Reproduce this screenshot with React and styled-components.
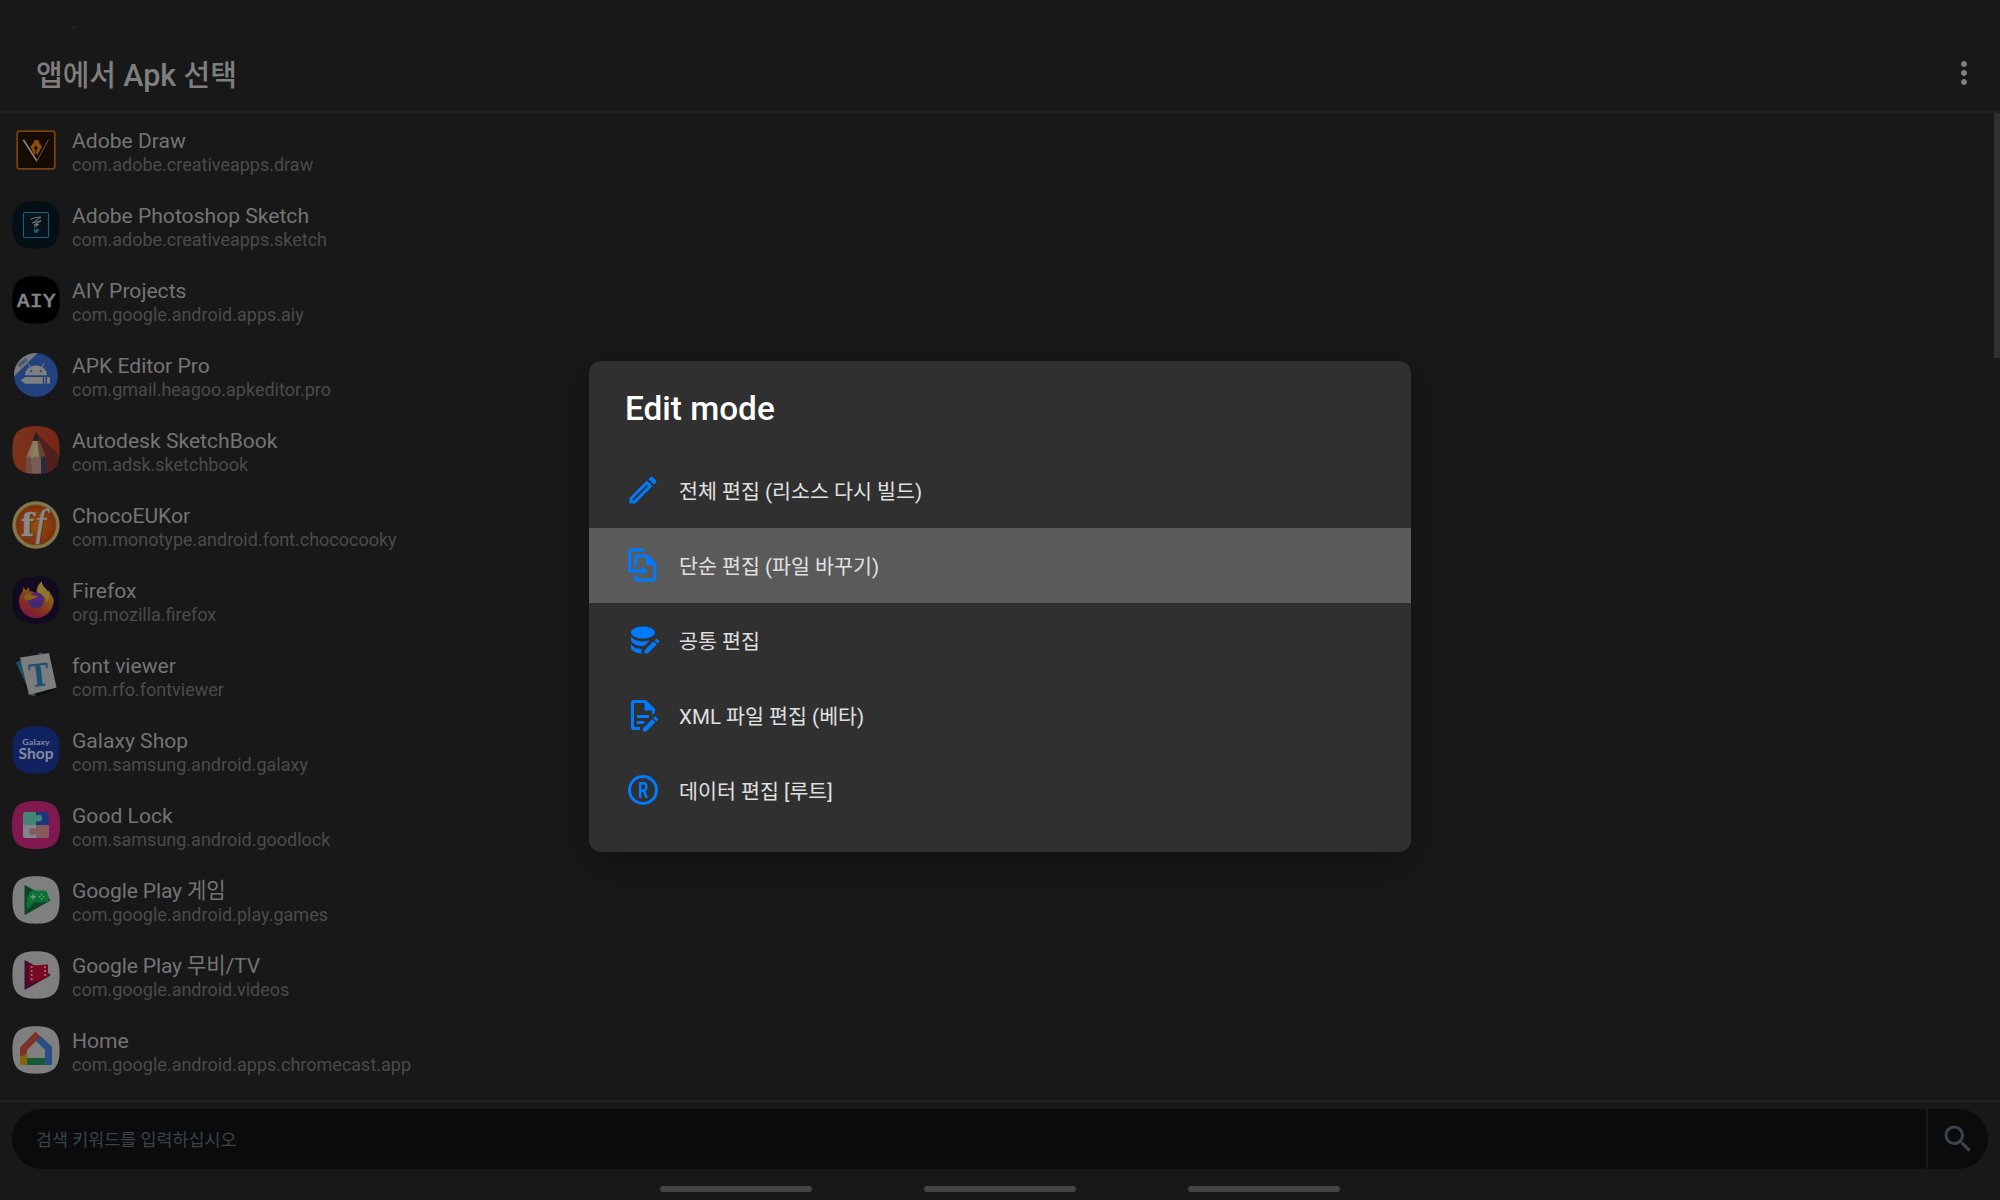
import React from 'react';
import styled, { createGlobalStyle } from 'styled-components';
import { MdMoreVert, MdSearch } from 'react-icons/md';

const GlobalStyle = createGlobalStyle`
  * { box-sizing: border-box; }
  html, body { margin: 0; background: #181818; }
  body { font-family: Roboto, "Noto Sans CJK KR", sans-serif; overflow: hidden; }
`;

const Screen = styled.div`
  position: relative;
  width: 2000px;
  height: 1200px;
  display: flex;
  flex-direction: column;
  background: #181818;
  overflow: hidden;
`;

const StatusBar = styled.div`
  height: 36px;
  padding: 24px 0 0 71px;
  line-height: 0;
`;

const Header = styled.header`
  height: 77px;
  padding: 0 18px 2px 36px;
  display: flex;
  align-items: center;
  justify-content: space-between;
  border-bottom: 2px solid #242424;
  color: #7f7f7f;
`;

const Title = styled.h1`
  margin: 6px 0 0;
  font-size: 29px;
  line-height: 40px;
  font-weight: 500;
  white-space: nowrap;
`;

const TitleLatin = styled.span`
  font-size: 30.5px;
`;

const ListArea = styled.main`
  height: 987px;
  display: flex;
  justify-content: space-between;
`;

const AppList = styled.ul`
  margin: 0;
  padding: 0;
  list-style: none;
`;

const AppRow = styled.li`
  height: 75px;
  padding: 13px 0 0 12px;
  display: flex;
  gap: 12px;
`;

const AppIcon = styled.svg`
  width: 48px;
  height: 48px;
  flex: none;
`;

const AppText = styled.div`
  display: flex;
  flex-direction: column;
  padding-top: 3px;
  white-space: nowrap;
`;

const AppName = styled.span`
  font-size: 21.1px;
  line-height: 24px;
  letter-spacing: ${({ $tight }) => ($tight ? '-0.15px' : 'normal')};
  color: #747474;
`;

const PackageName = styled.span`
  font-size: 18px;
  line-height: 24px;
  color: #4b4b4b;
`;

const ScrollThumb = styled.div`
  width: 6px;
  height: 245px;
  background: #303030;
`;

const SearchDock = styled.div`
  height: 69px;
  padding: 7px 12px 0;
  border-top: 2px solid #242424;
`;

const SearchBar = styled.div`
  height: 60px;
  display: flex;
  gap: 2px;
  border-radius: 30px;
  overflow: hidden;
`;

const SearchField = styled.div`
  flex: 1;
  padding: 1px 0 0 24px;
  display: flex;
  align-items: center;
  background: #0b0b0b;
  color: #39434c;
  font-size: 17.4px;
  line-height: 24px;
`;

const SearchButton = styled.div`
  width: 60px;
  display: flex;
  align-items: center;
  justify-content: center;
  background: #0b0b0b;
  color: #3b444d;
`;

const NavBar = styled.nav`
  flex: 1;
  padding-top: 17px;
  display: flex;
  justify-content: center;
  gap: 111.5px;
`;

const NavHandle = styled.span`
  width: 152.5px;
  height: 6px;
  border-radius: 3px;
  background: #454545;
`;

const Overlay = styled.div`
  position: absolute;
  inset: 0;
  padding-top: 361px;
  display: flex;
  justify-content: center;
  align-items: flex-start;
`;

const Dialog = styled.section`
  width: 822px;
  height: 491px;
  border-radius: 12px;
  background: #303030;
  box-shadow: 0 12px 36px rgba(0, 0, 0, 0.3);
`;

const DialogTitle = styled.h2`
  margin: 0;
  height: 92px;
  padding: 28px 0 0 36px;
  font-size: 33.35px;
  line-height: 40px;
  font-weight: 500;
  color: #fff;
`;

const Option = styled.div`
  height: 75px;
  padding: 0 36px 1px;
  display: flex;
  align-items: center;
  gap: 18px;
  background: ${({ $active }) => ($active ? '#5a5a5a' : 'transparent')};
`;

const OptionIcon = styled.svg`
  width: 36px;
  height: 36px;
  flex: none;
  fill: #007bff;
`;

const OptionLabel = styled.span`
  margin-top: 4px;
  font-size: 20.6px;
  line-height: 28px;
  color: #e0e0e0;
  white-space: nowrap;
`;

const SQUIRCLE = 'M24 .3C41.5 .3 47.6 6.5 47.6 24S41.5 47.7 24 47.7 .4 41.5 .4 24 6.5 .3 24 .3Z';
const Squircle = ({ fill }) => <path d={SQUIRCLE} fill={fill} />;

const icons = {
  draw: (
    <>
      <rect x="5.2" y="5.2" width="37.6" height="37.6" rx="2.5" fill="#150b02" stroke="#76410f" strokeWidth="1.8" />
      <path d="M10.400 14l1.800-.6 13 20.600-.8 1.800Z" fill="#85807a" />
      <path d="M36.600 13.600L25 34.600l-.7 1.200" fill="none" stroke="#77736d" strokeWidth=".8" />
      <path d="M22.200 14h4.400l.4 2.600 3 4.200-4.400 8-1.200-.2v-5.200a1.600 1.600 0 1 0-1 0v5.200l-1.400-.2-3.600-8 3.400-4Z" fill="#8d4c0c" />
    </>
  ),
  sketch: (
    <>
      <Squircle fill="#040f15" />
      <rect x="11.5" y="11.5" width="25" height="25" rx="1.2" fill="#07131a" stroke="#17607d" strokeWidth="1.1" />
      <path d="M18.500 18.500c3-1.800 7-2.400 10.500-2.300L20.500 22l8.500-2.200-7 4.400 5-1-5 3.500" fill="none" stroke="#777c7e" strokeWidth="1" />
      <path d="M21.500 28.200l1.800.5 1.500-1.400.5 1.200 2-.2-.8 1.800-2.200 2.500-2.400-2Z" fill="#17627f" />
    </>
  ),
  aiy: (
    <>
      <Squircle fill="#000" />
      <text x="24.3" y="31" textAnchor="middle" fontFamily='"DejaVu Sans Mono", monospace' fontWeight="400" fontSize="18.5" textLength="39" lengthAdjust="spacingAndGlyphs" fill="#858585" stroke="#858585" strokeWidth=".6">AIY</text>
    </>
  ),
  apkEditor: (
    <>
      <clipPath id="apk-disc"><circle cx="24" cy="24" r="22" /></clipPath>
      <circle cx="24" cy="24" r="22" fill="#21427d" />
      <g clipPath="url(#apk-disc)"><path d="M0 0H27.500L0 27.500Z" fill="#7b7b7b" /></g>
      <text x="0" y="0" transform="translate(8.8 16.4) rotate(-45)" fontSize="5.5" fontWeight="700" textLength="10.5" fill="#263f6c">PRO</text>
      <path d="M13 24.200c0-5.500 4.800-9.700 11-9.700s11 4.200 11 9.700Z" fill="#7f7f7f" />
      <path d="M18 16l-2-3.800M30 16l2-3.800" stroke="#7f7f7f" strokeWidth="1" />
      <circle cx="19.2" cy="20.2" r="1.1" fill="#21427d" /><circle cx="28.8" cy="20.2" r="1.1" fill="#21427d" />
      <path d="M9 29.200l4-3.200h17.800v6.700H13ZM32.200 26h1.400v6.700h-1.400ZM35 26h1.500a1.500 1.500 0 0 1 1.500 1.500v3.700a1.500 1.500 0 0 1-1.500 1.500H35Z" fill="#7f7f7f" />
    </>
  ),
  sketchBook: (
    <>
      <linearGradient id="book-bg" x2="1"><stop stopColor="#7b351b" /><stop offset="1" stopColor="#782519" /></linearGradient>
      <clipPath id="book-clip"><path d={SQUIRCLE} /></clipPath>
      <path d={SQUIRCLE} fill="url(#book-bg)" />
      <g clipPath="url(#book-clip)">
        <path d="M24 6L48 30v18H34V30Z" fill="#50211c" />
        <path d="M20.800 15H24V38H14V32Z" fill="#85765c" />
        <path d="M22.500 15h3L29 36H19.500Z" fill="#8d7d62" />
        <path d="M25.500 15h1.800L34 32v6h-6Z" fill="#594a3b" />
        <path d="M24 5.500l3.300 9.500-1.800-.6-1.500.6-1.700-.6-1.600.6Z" fill="#20232a" />
        <path d="M14 32.500q2.800-4 5.500 0V48H14Z" fill="#6b4b44" />
        <path d="M19.500 33q4.500-5 9.500 0v15h-9.500Z" fill="#7b5c54" />
        <path d="M29 33q2.500-5 5-.5V48h-5Z" fill="#252b3b" />
      </g>
    </>
  ),
  choco: (
    <>
      <radialGradient id="choco-bg"><stop stopColor="#93500e" /><stop offset=".75" stopColor="#83380d" /><stop offset="1" stopColor="#7e2e0c" /></radialGradient>
      <circle cx="24" cy="24" r="23.7" fill="#827749" />
      <circle cx="24" cy="24" r="20" fill="url(#choco-bg)" stroke="#6d4720" strokeWidth=".8" />
      <g fill="#4b2b18" transform="translate(1 .8)">
        <text x="9" y="35.3" fontFamily='"DejaVu Serif", serif' fontWeight="700" fontSize="32" textLength="13" lengthAdjust="spacingAndGlyphs">f</text>
        <text x="23.5" y="34.5" fontFamily='"Liberation Serif", serif' fontStyle="italic" fontSize="37">f</text>
      </g>
      <g fill="#8b8888" stroke="#8b8888" strokeWidth=".5">
        <text x="9" y="35.3" fontFamily='"DejaVu Serif", serif' fontWeight="700" fontSize="32" textLength="13" lengthAdjust="spacingAndGlyphs">f</text>
        <text x="23.5" y="34.5" fontFamily='"Liberation Serif", serif' fontStyle="italic" fontSize="37">f</text>
      </g>
    </>
  ),
  firefox: (
    <>
      <linearGradient id="fx-body" x1=".85" y1="0" x2=".25" y2="1">
        <stop stopColor="#8b7c22" /><stop offset=".35" stopColor="#89591c" /><stop offset=".7" stopColor="#842d24" /><stop offset="1" stopColor="#7c1444" />
      </linearGradient>
      <radialGradient id="fx-globe" cx=".55" cy=".2" r=".9"><stop stopColor="#5c2181" /><stop offset="1" stopColor="#302f70" /></radialGradient>
      <Squircle fill="#120a20" />
      <path d="M24 42C14.500 42 7 34.600 7 25.500 7 21 8.500 17.600 10.800 15l.4-3.800 2.900 3 2.800-3.200.6 4.400c2.700-.6 4.700.6 5.700 2.300h1.500c-.6-4.800 1.200-9.200 5-12.300.5 4.500 2.600 5.700 5 8.300l.3 3.200 1.800-2.700 2 4c2 2.400 3 5 3 7.300C41 34.600 33.500 42 24 42Z" fill="url(#fx-body)" />
      <circle cx="24" cy="24.2" r="8" fill="url(#fx-globe)" />
      <path d="M11.500 20.500c3-3.500 7-3 9.300-1.200l4.700.5c-.5 2-2.500 2.800-4.700 3-2 2-4.500 1-7.300 1.500Z" fill="#8b5d1b" />
      <path d="M29.700 5.500c.5 4.500 2.600 5.700 5 8.300C37.500 17 38 22 35 26.500c0-5.500-4-8-9.500-10.500-.2-4 1.200-8 4.200-10.500Z" fill="#8c7930" />
    </>
  ),
  fontViewer: (
    <>
      <path d="M8 33l18 12 15-6-1-3Z" fill="#0e0e0e" />
      <path d="M4 11.500l5.500-2.500L18 37l6 7.500-4 1Z" fill="#1f4e68" />
      <path d="M25 3l5-1.800 1 2.300Z" fill="#255a73" />
      <path d="M8 6.500L37 2l7.500 34.500-27.500 7.500Z" fill="#7b7d7e" />
      <text transform="translate(18.2 36.2) rotate(-7)" fontFamily='"DejaVu Serif", serif' fontWeight="700" fontSize="31" textLength="20" lengthAdjust="spacingAndGlyphs" fill="#1b4e70">T</text>
    </>
  ),
  galaxy: (
    <>
      <Squircle fill="#102360" />
      <text x="24" y="19.2" textAnchor="middle" fontFamily="Lato, sans-serif" fontWeight="700" fontSize="8.3" textLength="27.5" lengthAdjust="spacingAndGlyphs" fill="#858b9f">Galaxy</text>
      <text x="24" y="32.8" textAnchor="middle" fontFamily="Lato, sans-serif" fontWeight="700" fontSize="15.5" textLength="35" lengthAdjust="spacingAndGlyphs" fill="#858b9f">Shop</text>
    </>
  ),
  goodLock: (
    <>
      <path d="M24 0C42 0 48 6 48 24S42 48 24 48 0 42 0 24 6 0 24 0Z" fill="#80194f" />
      <path d="M13.500 11H24v13H11V13.500A2.500 2.500 0 0 1 13.500 11Z" fill="#468378" />
      <path d="M24 11h10.500a2.500 2.500 0 0 1 2.500 2.500V24H24Z" fill="#1b367f" />
      <path d="M11 24h13v13H13.500a2.500 2.500 0 0 1-2.500-2.500Z" fill="#81868a" />
      <path d="M24 24h13v10.500a2.500 2.500 0 0 1-2.500 2.500H24Z" fill="#85595c" />
      <circle cx="26.7" cy="17.2" r="3.4" fill="#468378" />
      <circle cx="20.7" cy="30.5" r="3.4" fill="#85595c" />
    </>
  ),
  playGames: (
    <>
      <Squircle fill="#7f7f7f" />
      <path d="M12.500 10q0-1 1.200-.6L38 23.200q.9.800 0 1.500L13.700 38.500q-1.200.4-1.200-.6Z" fill="#0b4324" />
      <path d="M19.500 14.500H32.500c3 0 5.500 8.500 4 10.500-1.500 2-4.500-.5-6.500 1.500H22c-3 2-4 6-6.300 6-2.500 0-.8-15.500 3.800-18Z" fill="#0d7238" />
      <path d="M21.300 18.200v5.200M18.700 20.800h5.200" stroke="#8b9a90" strokeWidth="1.2" />
      <g fill="#8b9a90"><circle cx="29.6" cy="18.7" r=".8" /><circle cx="29.6" cy="22.7" r=".8" /><circle cx="27.6" cy="20.7" r=".8" /><circle cx="31.6" cy="20.7" r=".8" /></g>
    </>
  ),
  playMovies: (
    <>
      <Squircle fill="#7f7f7f" />
      <path d="M12.500 10q0-1 1.200-.6L38 23.200q.9.800 0 1.500L13.700 38.500q-1.200.4-1.200-.6Z" fill="#470c2b" />
      <path d="M16.500 13.500c3 1 8 .8 19.500 0V26l-4 1.500c-5 3-10 4-15.500 3.500Z" fill="#790824" />
      <g fill="#a17d86"><path d="M18.800 15.200h1.700v1.700h-1.700ZM18.800 19.200h1.700v1.700h-1.700ZM18.800 23.200h1.700v1.700h-1.700ZM18.800 27.200h1.700v1.700h-1.700ZM32.200 15.200h1.700v1.700h-1.700ZM32.200 19.200h1.700v1.700h-1.700ZM32.200 23.200h1.700v1.700h-1.700Z" /></g>
    </>
  ),
  home: (
    <>
      <Squircle fill="#7f7f7f" />
      <path d="M8 28.500L15 23v16H9q-1 0-1-1Z" fill="#87640b" />
      <path d="M24 6.500l5 4.500v3L15 27.500 8 31v-9.500L22.500 6.500q1.500-1.200 3 0Z" fill="#7d3128" />
      <path d="M29 10.200l11 10.600V38q0 1-1 1h-6V24l-9-9Z" fill="#294e88" />
      <path d="M15 32h18v7H15Z" fill="#155c36" />
      <path d="M24 15l9 9v8H15v-8Z" fill="#7f7f7f" />
    </>
  ),
};

const apps = [
  ['draw', 'Adobe Draw', 'com.adobe.creativeapps.draw'],
  ['sketch', 'Adobe Photoshop Sketch', 'com.adobe.creativeapps.sketch'],
  ['aiy', 'AIY Projects', 'com.google.android.apps.aiy'],
  ['apkEditor', 'APK Editor Pro', 'com.gmail.heagoo.apkeditor.pro'],
  ['sketchBook', 'Autodesk SketchBook', 'com.adsk.sketchbook'],
  ['choco', 'ChocoEUKor', 'com.monotype.android.font.chococooky'],
  ['firefox', 'Firefox', 'org.mozilla.firefox'],
  ['fontViewer', 'font viewer', 'com.rfo.fontviewer'],
  ['galaxy', 'Galaxy Shop', 'com.samsung.android.galaxy'],
  ['goodLock', 'Good Lock', 'com.samsung.android.goodlock'],
  ['playGames', 'Google Play 게임', 'com.google.android.play.games'],
  ['playMovies', 'Google Play 무비/TV', 'com.google.android.videos'],
  ['home', 'Home', 'com.google.android.apps.chromecast.app'],
];

const options = [
  {
    label: '전체 편집 (리소스 다시 빌드)',
    icon: <path fillRule="evenodd" d="M3 17.250L14.600 5.650 18.350 9.400 6.750 21H3ZM5 18.080V19H5.920L15.500 9.400 14.600 8.480ZM15.600 4.700L17 3.300Q17.660 2.700 18.350 3.300L20.700 5.650Q21.300 6.340 20.700 7L19.300 8.400Z" />,
  },
  {
    label: '단순 편집 (파일 바꾸기)',
    active: true,
    icon: (
      <>
        <path d="M2 3C2 1.900 2.900 1 4 1H12L14 3H4V15H11V13L15 16L11 19V17H2Z" />
        <path d="M8 5H15L21 11V21A2 2 0 0 1 19 23H8A2 2 0 0 1 6 21V19H8V21H19V12H14V7H8V13H6V7A2 2 0 0 1 8 5Z" />
      </>
    ),
  },
  {
    label: '공통 편집',
    icon: (
      <>
        <path d="M12 3C7.580 3 4 4.790 4 7S7.580 11 12 11 20 9.210 20 7 16.420 3 12 3M4 9V12C4 14.210 7.580 16 12 16H12.700L16.700 12C15.400 12.650 13.800 13 12 13 7.580 13 4 11.210 4 9M4 14V17C4 19.210 7.580 21 11.100 21V18C7.300 17.900 4 16.210 4 14" />
        <path d="M21.040 11.130C20.900 11.130 20.760 11.190 20.650 11.300L19.650 12.300 21.700 14.350 22.700 13.350C22.920 13.140 22.920 12.790 22.700 12.580L21.420 11.300C21.310 11.190 21.180 11.130 21.040 11.130M19.070 12.880L13 18.940V21H15.060L21.120 14.930Z" />
      </>
    ),
  },
  {
    label: 'XML 파일 편집 (베타)',
    icon: <path d="M8,12H16V14H8V12M10,20H6V4H13V9H18V12.1L20,10.1V8L14,2H6A2,2 0 0,0 4,4V20A2,2 0 0,0 6,22H10V20M8,18H12.1L13,17.1V16H8V18M20.2,13C20.3,13 20.5,13.1 20.6,13.2L21.9,14.5C22.1,14.7 22.1,15.1 21.9,15.3L20.9,16.3L18.8,14.2L19.8,13.2C19.9,13.1 20,13 20.2,13M20.2,16.9L14.1,23H12V20.9L18.1,14.8L20.2,16.9Z" />,
  },
  {
    label: '데이터 편집 [루트]',
    icon: (
      <>
        <circle cx="12" cy="12" r="9" fill="none" stroke="#007bff" strokeWidth="2" />
        <text transform="translate(12.2 17.1) scale(.74 1)" textAnchor="middle" fontSize="14.5" fontWeight="700">R</text>
      </>
    ),
  },
];

export default function App() {
  return (
    <Screen>
      <GlobalStyle />
      <StatusBar>
        <svg width="6" height="4"><path d="M1 3L3 2.300 5 1" fill="none" stroke="#3c3c3c" strokeWidth=".7" /></svg>
      </StatusBar>
      <Header>
        <Title>앱에서 <TitleLatin>Apk</TitleLatin> 선택</Title>
        <MdMoreVert size={36} />
      </Header>
      <ListArea>
        <AppList>
          {apps.map(([icon, name, pkg]) => (
            <AppRow key={pkg}>
              <AppIcon viewBox="0 0 48 48">{icons[icon]}</AppIcon>
              <AppText>
                <AppName $tight={name.startsWith('Google')}>{name}</AppName>
                <PackageName>{pkg}</PackageName>
              </AppText>
            </AppRow>
          ))}
        </AppList>
        <ScrollThumb />
      </ListArea>
      <SearchDock>
        <SearchBar>
          <SearchField>검색 키워드를 입력하십시오</SearchField>
          <SearchButton><MdSearch size={36} /></SearchButton>
        </SearchBar>
      </SearchDock>
      <NavBar>
        <NavHandle />
        <NavHandle />
        <NavHandle />
      </NavBar>
      <Overlay>
        <Dialog>
          <DialogTitle>Edit mode</DialogTitle>
          {options.map(({ label, icon, active }) => (
            <Option key={label} $active={active}>
              <OptionIcon viewBox="0 0 24 24">{icon}</OptionIcon>
              <OptionLabel>{label}</OptionLabel>
            </Option>
          ))}
        </Dialog>
      </Overlay>
    </Screen>
  );
}
